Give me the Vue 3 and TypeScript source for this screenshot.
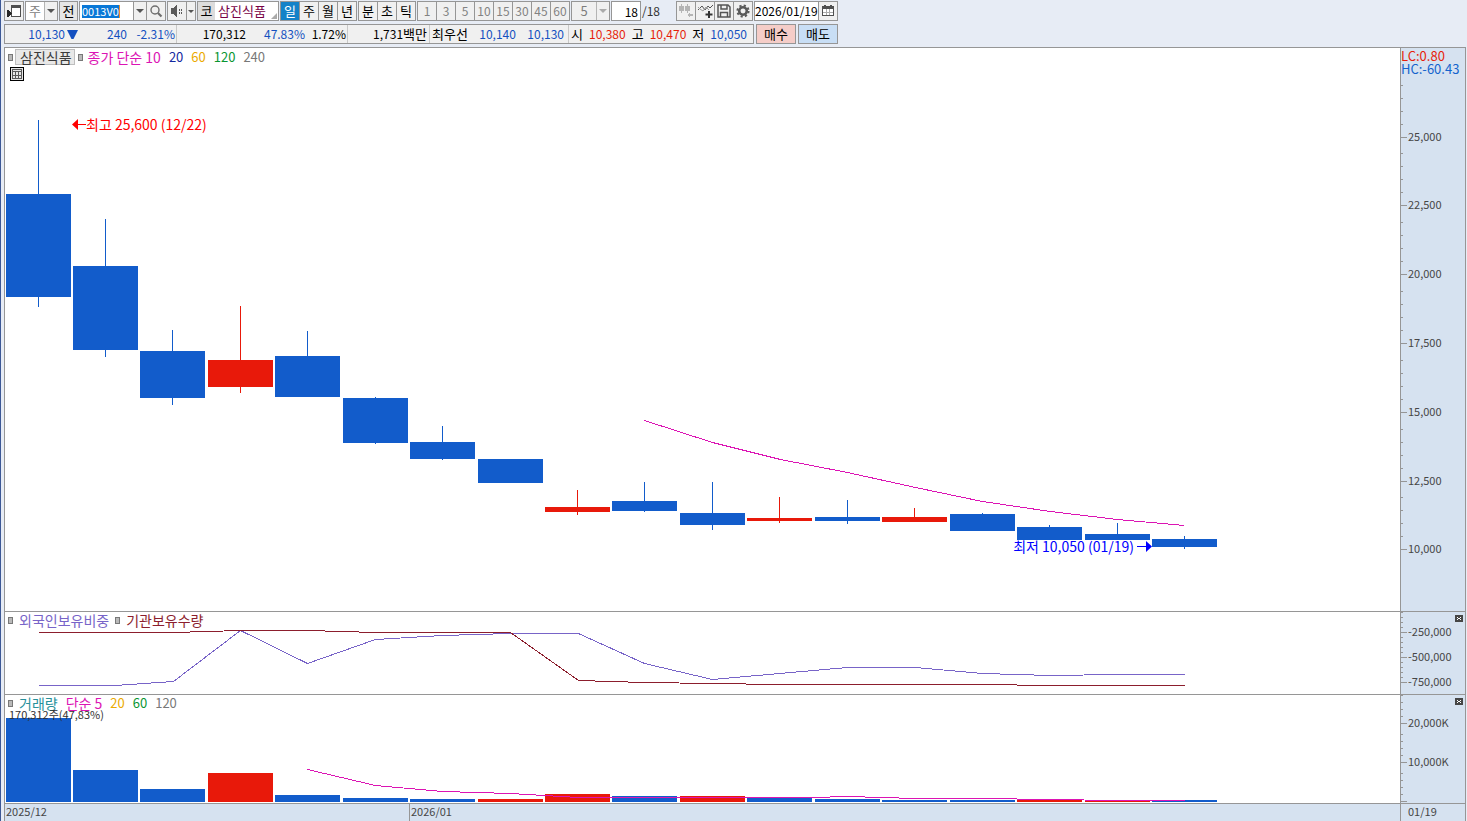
<script setup lang="ts">
import { ref } from 'vue'

interface Candle {
  x: number
  top: number
  bottom: number
  high: number
  low: number
  up: boolean
  volTop: number
}

interface Box {
  x: number
  y: number
  w: number
  h: number
}

const code = ref('0013V0')
const period = ref('일')
const periods = ['일', '주', '월', '년']
const units = ['분', '초', '틱']
const minutes = ['1', '3', '5', '10', '15', '30', '45', '60']
const count = ref('18')
const date = ref('2026/01/19')

const priceBox: Box = { x: 5, y: 48, w: 1395, h: 563 }
const holdBox: Box = { x: 5, y: 612, w: 1395, h: 82 }
const volBox: Box = { x: 5, y: 695, w: 1395, h: 108 }

const viewBox = (b: Box) => `${b.x} ${b.y} ${b.w} ${b.h}`
const pct = (v: number, start: number, size: number) => `${((v - start) / size) * 100}%`

// top, bottom, high, low, rising, volume top
const rows: [number, number, number, number, boolean, number][] = [
  [194, 297, 120, 307, false, 718],
  [266, 350, 219, 357, false, 770],
  [351, 398, 330, 405, false, 789],
  [360, 387, 306, 393, true, 773],
  [356, 397, 331, 397, false, 795],
  [398, 443, 397, 444, false, 798],
  [442, 459, 426, 460, false, 799],
  [459, 483, 459, 483, false, 799],
  [507, 512, 490, 515, true, 794],
  [501, 511, 482, 512, false, 796],
  [513, 525, 482, 530, false, 796],
  [518, 521, 497, 523, true, 797],
  [517, 521, 500, 524, false, 799],
  [517, 522, 508, 522, true, 800],
  [514, 531, 513, 531, false, 800],
  [527, 540, 525, 540, false, 800],
  [534, 540, 523, 540, false, 801],
  [539, 547, 536, 549, false, 800],
]
const volumeUp = [3, 7, 8, 10, 15, 16]

const candles: Candle[] = rows.map(([top, bottom, high, low, up, volTop], i) => ({
  x: Math.floor(6 + i * 67.44),
  top,
  bottom,
  high,
  low,
  up,
  volTop,
}))

const ma10 = '644,420 712,442 780,459 847,472 915,487 982,501 1050,511 1117,519 1184,525'
const foreign =
  '38,685 114,685 173,681 240,630 307,663 375,639 442,635 510,633 578,633 644,663 712,679 779,673 847,667 915,667 982,673 1050,675 1117,674 1184,674'
const inst =
  '38,632 173,632 240,630 307,630 375,632 510,632 578,680 644,682 712,683 779,684 982,684 1050,685 1184,685'
const volMa5 = '307,769 375,785 442,791 510,793 578,797 813,797 847,796 915,798 982,798 1050,799 1117,800 1184,800'

const priceTicks = [
  { y: 137, text: '25,000' },
  { y: 205, text: '22,500' },
  { y: 274, text: '20,000' },
  { y: 343, text: '17,500' },
  { y: 412, text: '15,000' },
  { y: 481, text: '12,500' },
  { y: 549, text: '10,000' },
]
const holdTicks = [
  { y: 632, text: '-250,000' },
  { y: 657, text: '-500,000' },
  { y: 682, text: '-750,000' },
]
const volTicks = [
  { y: 723, text: '20,000K' },
  { y: 762, text: '10,000K' },
  { y: 801, text: '' },
]

const axes = [
  { name: 'price', box: priceBox, ticks: priceTicks, step: 13 },
  { name: 'hold', box: holdBox, ticks: holdTicks, step: 5 },
  { name: 'volume', box: volBox, ticks: volTicks, step: 7 },
]
</script>

<template>
  <div class="app">
    <header class="head">
      <div class="bar">
        <button class="box icon-btn" aria-label="패널">
          <svg width="18" height="18" viewBox="0 0 18 18" shape-rendering="crispEdges">
            <rect x="6" y="3" width="10" height="12" fill="#505050" />
            <rect x="7" y="6" width="8" height="8" fill="#fff" />
            <path d="M2 8H3L7 11V12L3 15H2Z" fill="#282828" />
          </svg>
        </button>
        <div class="box combo w-kind">
          <select aria-label="구분" class="dim"><option>주</option></select>
          <span class="arrow-cell"><span class="arrow"></span></span>
        </div>
        <button class="box w-one">전</button>
        <div class="box group w-code">
          <span class="code-wrap"><input v-model="code" class="code" aria-label="종목코드" /></span>
          <button class="drop" aria-label="종목 목록"><span class="arrow"></span></button>
          <button class="cell-btn" aria-label="종목 검색">
            <svg width="14" height="14" viewBox="0 0 14 14" fill="none" stroke="#6e6e6e">
              <circle cx="6" cy="6" r="4" stroke-width="1.400" />
              <path d="M9 9L12.500 12.500" stroke-width="2.200" />
            </svg>
          </button>
        </div>
        <div class="box group w-sound">
          <button class="cell-btn" aria-label="소리">
            <svg width="14" height="14" viewBox="0 0 14 14" fill="#5a5a5a" shape-rendering="crispEdges">
              <path d="M1 4H3V10H1Z M3 4L7 1V13L3 10Z" />
              <path d="M9 5h1v2H9zM9 8h1v2H9zM11 5h1v2h-1zM11 8h1v2h-1z" />
            </svg>
          </button>
          <button class="drop thin" aria-label="소리 설정"><span class="arrow small"></span></button>
        </div>
        <div class="box name-box">
          <span class="market">코</span>
          <span class="stock">삼진식품</span>
          <span class="corner"></span>
        </div>
        <div class="box group">
          <button
            v-for="p in periods"
            :key="p"
            class="cell-btn"
            :class="{ on: period === p }"
            @click="period = p"
          >
            {{ p }}
          </button>
        </div>
        <div class="box group">
          <button v-for="u in units" :key="u" class="cell-btn">{{ u }}</button>
        </div>
        <div class="box group">
          <button v-for="m in minutes" :key="m" class="cell-btn num" disabled>{{ m }}</button>
        </div>
        <div class="box combo w-tick off">
          <select aria-label="틱 단위" class="dim" disabled><option>5</option></select>
          <span class="arrow-cell"><span class="arrow pale"></span></span>
        </div>
        <input v-model="count" class="box count" aria-label="조회 개수" />
        <span class="total">/18</span>
        <div class="box group">
          <button class="cell-btn" aria-label="봉 추가" disabled>
            <svg width="18" height="18" viewBox="0 0 18 18" fill="#b4b4b4" shape-rendering="crispEdges">
              <path d="M4 2h1v9H4zM2 4h5v5H2zM10 2h1v9h-1zM8 4h5v5H8zM10 13l3-3v2h3v2h-3v2z" />
            </svg>
          </button>
          <button class="cell-btn" aria-label="지표 추가">
            <svg width="18" height="18" viewBox="0 0 18 18" fill="none" stroke="#555">
              <path d="M2 8L6 4L9 8L12 4L14 6L17 3" />
              <path d="M2 5L4 7L7 9L10 5L13 8" stroke="#999" />
              <path d="M13 9V16M9.500 12.500H16.500" stroke-width="2" stroke="#333" />
            </svg>
          </button>
          <button class="cell-btn" aria-label="저장">
            <svg width="18" height="18" viewBox="0 0 18 18" fill="none" stroke="#555" stroke-width="1.500">
              <path d="M3 3H13L15 5V15H3Z" />
              <path d="M6 3V7H12V3M5.500 15V10.500H12.500V15" />
            </svg>
          </button>
          <button class="cell-btn" aria-label="설정">
            <svg width="18" height="18" viewBox="0 0 18 18" fill="none" stroke="#5a5a5a">
              <circle cx="9" cy="9" r="3.800" stroke-width="2.600" />
              <circle cx="9" cy="9" r="5.600" stroke-width="2" stroke-dasharray="2.200 2.200" />
            </svg>
          </button>
        </div>
        <div class="box group date-box">
          <input v-model="date" class="date" aria-label="기준일" />
          <button class="cell-btn" aria-label="달력">
            <svg width="14" height="14" viewBox="0 0 14 14" shape-rendering="crispEdges">
              <rect x="1" y="2" width="12" height="10" fill="#505050" />
              <path d="M2 5H12V11H2Z" fill="#fff" />
              <path d="M3 1h2v2H3zM9 1h2v2H9z" fill="#505050" />
              <path d="M5 5v6M8 5v6M2 8.500H12" fill="none" stroke="#aaa" />
            </svg>
          </button>
        </div>
      </div>

      <div class="bar">
        <div class="box quotes">
          <div class="cell c1 blue">
            <span class="price">10,130</span>
            <svg class="tri" width="11" height="9" viewBox="0 0 11 9"><path d="M0 0H11L6.500 9H4.500Z" fill="#1450c0" /></svg>
            <span class="diff">240</span>
            <span class="rate">-2.31%</span>
          </div>
          <div class="cell c2">
            <span class="vol">170,312</span>
            <span class="ratio blue">47.83%</span>
            <span class="turn">1.72%</span>
          </div>
          <div class="cell c3"><span>1,731<b>백만</b></span></div>
          <div class="cell c4">
            <b>최우선</b><span class="blue">10,140</span><span class="blue">10,130</span>
          </div>
          <div class="cell c5">
            <b>시</b><span class="red">10,380</span>
            <b>고</b><span class="red">10,470</span>
            <b>저</b><span class="blue">10,050</span>
          </div>
        </div>
        <button class="box trade buy">매수</button>
        <button class="box trade sell">매도</button>
      </div>
    </header>

    <main class="charts">
      <section class="pane price-pane">
        <svg class="plot" :viewBox="viewBox(priceBox)" preserveAspectRatio="none">
          <g v-for="c in candles" :key="c.x" :class="c.up ? 'rise' : 'fall'">
            <rect :x="c.x" :y="c.top" width="65" :height="c.bottom - c.top" />
            <rect :x="c.x + 32" :y="c.high" width="1" :height="c.low - c.high" />
          </g>
          <polyline :points="ma10" class="line magenta-line" transform="translate(0.5 0.5)" />
        </svg>
        <div class="legend">
          <i class="mark"></i>
          <button class="title">삼진식품</button>
          <i class="mark"></i>
          <span class="magenta main-label">종가 단순 10</span>
          <span class="navy gap">20</span>
          <span class="amber gap">60</span>
          <span class="green gap">120</span>
          <span class="gray gap">240</span>
        </div>
        <button class="grid-btn" aria-label="표 보기">
          <svg width="12" height="12" viewBox="0 0 12 12" shape-rendering="crispEdges">
            <path d="M1.500 1.500H10.500V10.500H1.500ZM1 3.500H11M1 7.500H11M4.500 3V11M7.500 3V11" fill="none" stroke="#5a5a5a" />
          </svg>
        </button>
        <div
          class="note red-note"
          :style="{ left: pct(72, priceBox.x, priceBox.w), top: pct(124, priceBox.y, priceBox.h) }"
        >
          <svg width="14" height="11" viewBox="0 0 14 11" fill="#f00"><path d="M0 5.500L6 0V5H14V6H6V11Z" /></svg>
          <span>최고 25,600 (12/22)</span>
        </div>
        <div
          class="note blue-note"
          :style="{ right: pct(1400, 1152, priceBox.w), top: pct(546, priceBox.y, priceBox.h) }"
        >
          <span>최저 10,050 (01/19)</span>
          <svg width="15" height="11" viewBox="0 0 15 11" fill="#00f"><path d="M15 5.500L9 0V5H0V6H9V11Z" /></svg>
        </div>
      </section>

      <section class="pane hold-pane">
        <svg class="plot" :viewBox="viewBox(holdBox)" preserveAspectRatio="none">
          <polyline :points="foreign" class="line purple-line" transform="translate(0.5 0.5)" />
          <polyline :points="inst" class="line maroon-line" transform="translate(0.5 0.5)" />
        </svg>
        <div class="legend low">
          <i class="mark"></i>
          <span class="purple wide">외국인보유비중</span>
          <i class="mark"></i>
          <span class="maroon wide">기관보유수량</span>
        </div>
      </section>

      <section class="pane vol-pane">
        <svg class="plot" :viewBox="viewBox(volBox)" preserveAspectRatio="none">
          <rect
            v-for="(c, i) in candles"
            :key="c.x"
            :class="volumeUp.includes(i) ? 'rise' : 'fall'"
            :x="c.x"
            :y="c.volTop"
            width="65"
            :height="802 - c.volTop"
          />
          <polyline :points="volMa5" class="line magenta-line" transform="translate(0.5 0.5)" />
        </svg>
        <div class="legend low">
          <i class="mark"></i>
          <span class="teal wide">거래량</span>
          <span class="magenta main-label">단순 5</span>
          <span class="amber gap">20</span>
          <span class="green gap">60</span>
          <span class="gray gap">120</span>
        </div>
        <p class="vol-note">170,312주(47,83%)</p>
      </section>

      <aside v-for="a in axes" :key="a.name" class="axis">
        <template v-for="t in a.ticks" :key="t.y">
          <i class="tick major" :style="{ top: pct(t.y, a.box.y, a.box.h) }"></i>
          <i
            v-for="n in 4"
            :key="n"
            class="tick"
            :style="{ top: pct(t.y - n * a.step, a.box.y, a.box.h) }"
          ></i>
          <span v-if="t.text" class="tick-label" :style="{ top: pct(t.y, a.box.y, a.box.h) }">{{ t.text }}</span>
        </template>
        <div v-if="a.name === 'price'" class="lchc">
          <div class="lc">LC:0.80</div>
          <div class="hc">HC:-60.43</div>
        </div>
        <button v-else class="close" aria-label="닫기">
          <svg width="8" height="7" viewBox="0 0 8 7" shape-rendering="crispEdges">
            <path d="M2 2h1v1H2zM5 2h1v1H5zM3 3h2v1H3zM2 4h1v1H2zM5 4h1v1H5z" fill="#fff" />
          </svg>
        </button>
      </aside>

      <div class="dates">
        <span class="month">2025/12</span>
        <span class="month second">2026/01</span>
      </div>
      <div class="last-date">01/19</div>
    </main>
  </div>
</template>

<style>
body {
  margin: 0;
}
</style>

<style scoped>
.app {
  min-height: 100vh;
  box-sizing: border-box;
  display: flex;
  flex-direction: column;
  padding: 0 1px 0 3px;
  border-left: 1px solid #3c5896;
  background: #e7ecf5;
  color: #000;
  font-family: "Noto Sans CJK KR", "Liberation Sans", sans-serif;
  font-size: 12px;
  line-height: 18px;
}
button,
input,
select {
  box-sizing: border-box;
  margin: 0;
  padding: 0;
  border: 0;
  border-radius: 0;
  outline: 0;
  color: inherit;
  font: inherit;
}
svg {
  display: block;
  flex: none;
}
.head {
  height: 46px;
  padding-top: 1px;
}
.bar {
  display: flex;
  gap: 1px;
  height: 20px;
  margin-bottom: 3px;
}
.box {
  box-sizing: border-box;
  flex: none;
  height: 20px;
  border: 1px solid #969696;
  background: #f0f0f0;
}
.icon-btn {
  width: 20px;
}
.w-kind {
  width: 33px;
}
.w-one {
  width: 19px;
  font-size: 13px;
  background: #e6e6e6;
}
.combo {
  display: flex;
  align-items: center;
  background: #fff;
}
.combo select {
  flex: 1;
  width: 18px;
  height: 18px;
  appearance: none;
  background: transparent;
  text-align: center;
  font-size: 13px;
  opacity: 1;
}
.dim {
  color: #7d7d7d;
}
.arrow {
  display: block;
  width: 0;
  border: 4px solid transparent;
  border-top-color: #555;
  border-bottom: 0;
}
.arrow.small {
  border-width: 3px;
  border-bottom: 0;
}
.arrow.pale {
  border-top-color: #aaa;
}
.combo.off {
  background: #f0f0f0;
}
.w-tick {
  width: 39px;
}
.arrow-cell {
  display: flex;
  align-items: center;
  height: 18px;
  padding: 0 2px;
  border-left: 1px solid #b4b4b4;
  background: #f0f0f0;
}
.group {
  display: flex;
}
.group > * + * {
  border-left: 1px solid #969696;
}
.cell-btn {
  display: flex;
  align-items: center;
  justify-content: center;
  width: 18px;
  height: 18px;
  background: #f0f0f0;
  font-size: 13px;
}
.group > .cell-btn + .cell-btn {
  width: 19px;
}
.cell-btn.on {
  background: #1482c8;
  color: #fff;
}
.cell-btn.num {
  color: #828282;
  font-size: 12px;
}
.w-code {
  width: 87px;
}
.code-wrap {
  display: flex;
  align-items: center;
  flex: 1;
  padding-left: 2px;
  background: #fff;
}
.code {
  width: 38px;
  height: 13px;
  border-right: 1px solid #f08c28;
  background: #0a78d7;
  color: #fff;
  font-size: 11px;
  line-height: 13px;
}
.drop {
  display: flex;
  align-items: center;
  justify-content: center;
  width: 13px;
  background: #f0f0f0;
}
.drop.thin {
  width: 9px;
}
.w-sound {
  width: 29px;
}
.group > .cell-btn:last-child {
  width: 19px;
}
.name-box {
  display: flex;
  position: relative;
  width: 82px;
  background: #fff;
  font-size: 13px;
}
.market {
  width: 17px;
  text-align: center;
  background: #dcdcdc;
}
.stock {
  padding-left: 3px;
  color: #780046;
}
.corner {
  position: absolute;
  right: 1px;
  bottom: 1px;
  border: 3px solid transparent;
  border-right-color: #aaa;
  border-bottom-color: #aaa;
}
.count {
  width: 30px;
  padding-right: 2px;
  background: #fff;
  text-align: right;
}
.total {
  width: 33px;
  line-height: 20px;
  color: #333;
}
.date-box {
  width: 84px;
}
.date {
  flex: 1;
  width: 63px;
  background: #fff;
}
.quotes {
  display: flex;
  width: 750px;
}
.cell {
  display: flex;
  align-items: center;
  box-sizing: border-box;
}
.cell + .cell {
  border-left: 1px solid #c8c8c8;
}
.cell span {
  text-align: right;
}
.cell b {
  font-weight: normal;
  font-size: 13px;
}
.c1 {
  width: 171px;
}
.c2 {
  width: 171px;
}
.c3 {
  width: 82px;
  justify-content: flex-end;
  padding-right: 2px;
}
.c4 {
  width: 139px;
  padding: 0 4px 0 2px;
  justify-content: space-between;
}
.c5 {
  flex: 1;
  padding: 0 6px 0 2px;
  justify-content: space-between;
}
.price {
  width: 60px;
}
.tri {
  margin-left: 2px;
}
.diff {
  width: 49px;
}
.rate {
  width: 48px;
}
.vol {
  width: 69px;
}
.ratio {
  width: 59px;
}
.turn {
  width: 41px;
}
.blue {
  color: #1450c0;
}
.red {
  color: #e61e0a;
}
.trade {
  width: 40px;
  margin-left: 1px;
  font-size: 13px;
}
.buy {
  background: #f5cdc8;
}
.sell {
  background: #c8def5;
}
.charts {
  flex: 1;
  display: grid;
  grid-template-columns: 1fr 64px;
  grid-template-rows: 1fr 82px 108px 17px;
  grid-auto-flow: column;
  gap: 1px;
  border: 1px solid #969696;
  border-bottom: 0;
  background: #969696;
}
.pane {
  position: relative;
  grid-column: 1;
  background: #fff;
  overflow: hidden;
}
.plot {
  position: absolute;
  inset: 0;
  width: 100%;
  height: 100%;
  shape-rendering: crispEdges;
}
.fall {
  fill: #125ccb;
}
.rise {
  fill: #e8190a;
}
.line {
  fill: none;
  stroke-width: 1;
}
.magenta-line {
  stroke: #dc14b4;
}
.purple-line {
  stroke: #7864c8;
}
.maroon-line {
  stroke: #8c1e2d;
}
.legend {
  position: relative;
  display: flex;
  align-items: center;
  height: 18px;
  padding-left: 3px;
  font-size: 13px;
  white-space: nowrap;
}
.legend.low {
  height: 16px;
}
.mark {
  box-sizing: border-box;
  width: 5px;
  height: 7px;
  border: 1px solid #787878;
  background: #b9b9b9;
}
.title {
  height: 16px;
  margin: 0 3px 0 2px;
  padding: 0 2px 0 4px;
  border: 1px solid #bebebe;
  background: #e8e8e8;
  color: #3c3c3c;
  font-size: 14px;
  line-height: 14px;
}
.main-label {
  margin-left: 5px;
  font-size: 14px;
}
.vol-pane .main-label {
  margin-left: 8px;
}
.gap {
  margin-left: 8px;
}
.wide {
  margin: 0 6px;
  font-size: 14px;
}
.vol-pane .wide {
  margin-right: 0;
}
.magenta {
  color: #dc14b4;
}
.navy {
  color: #1428a0;
}
.amber {
  color: #ebaa00;
}
.green {
  color: #0a9632;
}
.gray {
  color: #787878;
}
.purple {
  color: #7864c8;
}
.maroon {
  color: #8c1e2d;
}
.teal {
  color: #28919b;
}
.grid-btn {
  position: relative;
  display: block;
  width: 14px;
  height: 14px;
  margin: 1px 0 0 5px;
  border: 1px solid #000;
  background: #e6e6e6;
}
.note {
  position: absolute;
  display: flex;
  align-items: center;
  height: 18px;
  margin-top: -9px;
  font-size: 14px;
  white-space: nowrap;
}
.red-note {
  color: #f00;
}
.blue-note {
  gap: 3px;
  color: #00f;
}
.vol-note {
  position: relative;
  margin: -3px 0 0 4px;
  font-size: 11px;
  line-height: 12px;
  color: #323232;
}
.axis {
  position: relative;
  grid-column: 2;
  background: #d6e2f0;
}
.tick {
  position: absolute;
  left: 0;
  width: 2px;
  height: 1px;
  background: #969696;
}
.tick.major {
  width: 6px;
}
.tick-label {
  position: absolute;
  left: 7px;
  margin-top: -9px;
  font-size: 11px;
  line-height: 16px;
  color: #464646;
}
.lchc {
  font-size: 13px;
  line-height: 13px;
  padding-top: 1px;
}
.lc {
  color: #e61e0a;
}
.hc {
  color: #1464cd;
}
.close {
  position: absolute;
  top: 3px;
  right: 2px;
  width: 8px;
  height: 7px;
  background: #464646;
}
.dates,
.last-date {
  background: #d6e2f0;
  font-size: 11px;
  line-height: 15px;
  color: #464646;
}
.dates {
  grid-column: 1;
  grid-row: 4;
  display: grid;
  grid-template-columns: 404fr 991fr;
}
.month {
  padding-left: 1px;
}
.second {
  border-left: 1px solid #969696;
}
.last-date {
  grid-column: 2;
  grid-row: 4;
  padding-left: 7px;
}
</style>
